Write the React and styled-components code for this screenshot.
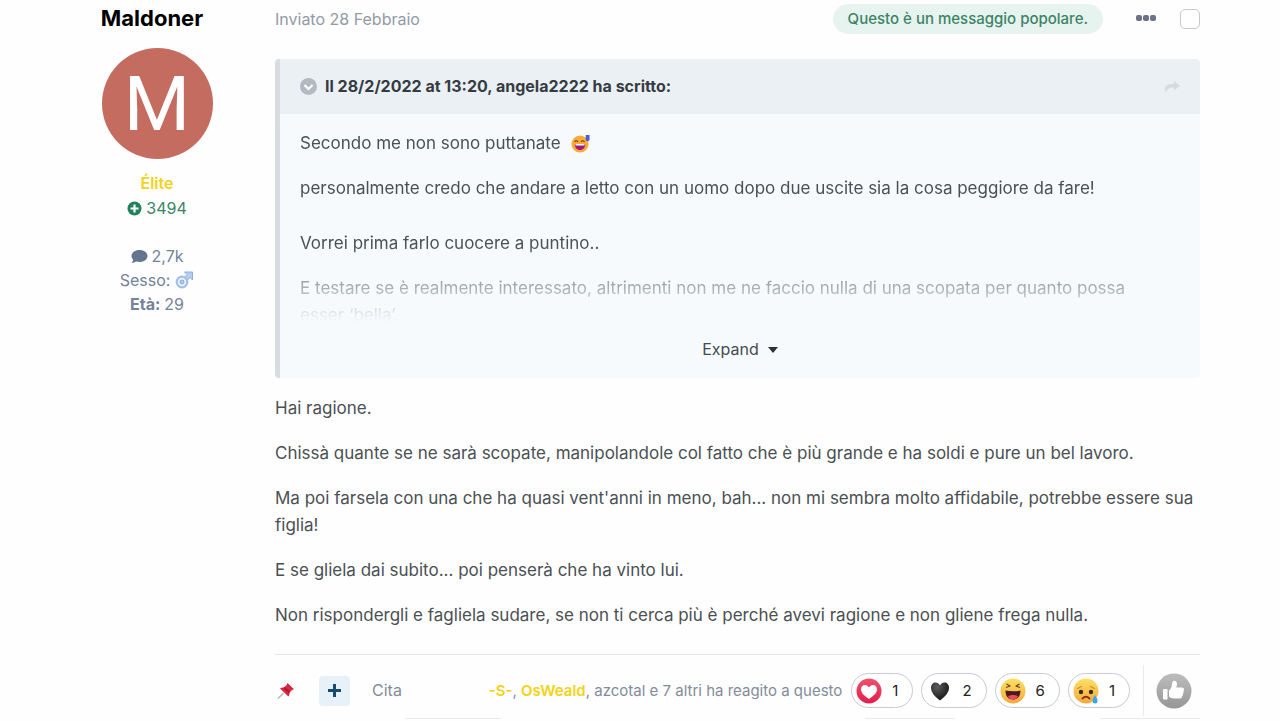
import React, { useState } from "react";
import styled, { createGlobalStyle } from "styled-components";

const GlobalStyle = createGlobalStyle`
  * {
    box-sizing: border-box;
  }
  body {
    margin: 0;
    background-color: #fefefe;
    color: #353c41;
    font-family: Inter, "Liberation Sans", sans-serif;
    font-size: 17px;
    line-height: 27px;
    overflow: hidden;
  }
  button {
    font: inherit;
    color: inherit;
    background: none;
    border: 0;
    padding: 0;
    cursor: pointer;
  }
  a {
    color: inherit;
    text-decoration: none;
  }
  svg {
    display: block;
    flex: none;
  }
`;

const Post = styled.article`
  display: flex;
  gap: 41px;
  padding: 4px 80px 0;
`;
const Author = styled.aside`
  flex: none;
  width: 154px;
  display: flex;
  flex-direction: column;
  align-items: center;
  color: #74829a;
  font-size: 16px;
  line-height: 24px;
`;
const AuthorName = styled.h3`
  margin: 0;
  padding-right: 10px;
  color: #000;
  font-size: 22px;
  font-weight: 700;
  line-height: 28px;
`;
const Avatar = styled.div`
  width: 111px;
  height: 111px;
  margin: 16px 0 12px;
  border-radius: 50%;
  background-color: #c56c61;
  color: #fff;
  font-family: Roboto, sans-serif;
  font-size: 76px;
  line-height: 113px;
  text-align: center;
`;
const Rank = styled.strong`
  margin-bottom: 1px;
  color: #f5d216;
  font-weight: 600;
`;
const AuthorRow = styled.div`
  display: flex;
  align-items: center;
  gap: 4px;
  color: ${(props) => props.$color || "inherit"};
`;
const AuthorStats = styled.div`
  display: flex;
  flex-direction: column;
  align-items: center;
  margin-top: 24px;
`;

const Content = styled.div`
  flex: 1;
  min-width: 0;
`;
const PostHeader = styled.header`
  display: flex;
  align-items: center;
  height: 30px;
  margin-bottom: 25px;
  color: #929aa7;
  font-size: 16px;
`;
const PostDate = styled.a`
  margin-right: auto;
`;
const Popular = styled.strong`
  padding: 0 15px;
  border-radius: 15px;
  background-color: #e7f3ee;
  color: #3b8465;
  font-size: 15px;
  font-weight: 500;
  line-height: 30px;
`;
const MenuButton = styled.button`
  margin: 0 24px 0 33px;
`;
const SelectPost = styled.input`
  appearance: none;
  width: 20px;
  height: 20px;
  margin: 0;
  border: 1px solid #c5c8cd;
  border-radius: 5px;
  background-color: #fff;
`;

const Quote = styled.blockquote`
  margin: 0 0 17px;
  border-left: 5px solid #d7dce0;
  border-radius: 4px;
  background-color: #f6fafd;
  overflow: hidden;
`;
const QuoteHeader = styled.div`
  display: flex;
  align-items: center;
  gap: 8px;
  height: 55px;
  padding: 0 20px;
  background-color: #ebf0f5;
  color: #353c41;
  font-size: 16px;
  font-weight: 700;
`;
const QuoteLink = styled.a`
  margin-left: auto;
`;
const QuoteBody = styled.div`
  display: flex;
  flex-direction: column;
  gap: 18px;
  max-height: ${(props) => (props.$open ? "none" : "216px")};
  padding: 16px 40px 0 20px;
  overflow: hidden;
  mask-image: ${(props) =>
    props.$open ? "none" : "linear-gradient(#000 130px, transparent 208px)"};
`;
const Text = styled.p`
  margin: 0;
  color: #4a5053;
`;
const SpacedText = styled(Text)`
  margin-top: 10px;
`;
const EmojiText = styled(Text)`
  display: flex;
  align-items: center;
  gap: 10px;
`;
const Expand = styled.button`
  display: flex;
  align-items: flex-start;
  justify-content: center;
  gap: 9px;
  width: 100%;
  height: 49px;
  padding-top: 7px;
  color: #454c50;
  font-size: 16px;
  & > svg {
    margin-top: 11px;
  }
`;

const Message = styled.div`
  display: flex;
  flex-direction: column;
  gap: 18px;
  padding-bottom: 25px;
`;

const Footer = styled.footer`
  display: flex;
  align-items: center;
  height: 64px;
  padding-top: 8px;
  padding-right: 8px;
  border-top: 1px solid #e3e5e8;
  color: #838c9a;
  font-size: 16px;
`;
const QuoteAdd = styled.button`
  display: grid;
  place-items: center;
  width: 31px;
  height: 30px;
  margin: 0 22px;
  border-radius: 4px;
  background-color: #e6f1fa;
`;
const QuoteAction = styled.button`
  margin-right: auto;
`;
const Reactors = styled.div`
  margin-right: 9px;
  font-size: 15px;
  white-space: nowrap;
`;
const Reactor = styled.a`
  color: ${(props) => (props.$elite ? "#f5d216" : "inherit")};
  font-weight: ${(props) => (props.$elite ? 600 : 400)};
`;
const Reactions = styled.div`
  display: flex;
  gap: 8px;
`;
const Reaction = styled.button`
  display: flex;
  align-items: center;
  gap: 10px;
  height: 35px;
  padding: 0 14px 0 4px;
  border: 1px solid #c9cbd2;
  border-radius: 18px;
  background-color: #fff;
  color: #222;
  font-size: 15px;
`;
const LikeArea = styled.div`
  display: flex;
  align-items: center;
  height: 51px;
  margin-left: 13px;
  padding-left: 12px;
  border-left: 1px solid #e9eaed;
`;

const NextRow = styled.div`
  display: grid;
  grid-template-columns: 130px 96px 1fr 90px 145px 100px;
  & > span {
    height: 1px;
  }
  & > span:nth-child(even) {
    background-color: #e9eaec;
  }
`;

const SweatSmile = () => (
  <svg width="19" height="19" viewBox="0 0 20 20">
    <circle cx="9.5" cy="10.5" r="9" fill="#f9ab35" />
    <path d="M3.8 8.2q1.7-2.2 3.6 0M10.6 8.2q1.7-2.2 3.6 0" stroke="#6b3a1c" strokeWidth="1.3" fill="none" />
    <path d="M4 10.5h11c0 4-2.3 6.3-5.5 6.3S4 14.5 4 10.5z" fill="#a9157c" />
    <path d="M4.7 10.5h9.6v1.5H4.8z" fill="#fff" />
    <path d="M15.5 1h4v4.5a2 2 0 0 1-4 0z" fill="#4b5be0" />
  </svg>
);

const LoveIcon = () => (
  <svg width="26" height="26" viewBox="0 0 26 26">
    <defs>
      <linearGradient id="love" x1="0" y1="0" x2="0" y2="1">
        <stop offset="0" stopColor="#f2506d" />
        <stop offset="1" stopColor="#e21d4c" />
      </linearGradient>
    </defs>
    <circle cx="13" cy="13" r="12.5" fill="url(#love)" />
    <path d="M13 21C8 17.500 5 14.700 5 11.200 5 8.600 6.900 7 9 7c1.700 0 3.100.9 4 2.500C13.900 7.900 15.300 7 17 7c2.100 0 4 1.600 4 4.200 0 3.500-3 6.300-8 9.800z" fill="#fff" />
  </svg>
);

const BlackHeart = () => (
  <svg width="26" height="26" viewBox="0 0 26 26">
    <defs>
      <radialGradient id="heart" cx="0.35" cy="0.25" r="0.7">
        <stop offset="0" stopColor="#5b5b5e" />
        <stop offset="1" stopColor="#1b1b1d" />
      </radialGradient>
    </defs>
    <path d="M14 22.500C8.800 18.600 5 14.500 5 9.800 5 6.500 7 4.500 9.500 4.500c2 0 3.600 1.100 4.500 3 .9-1.900 2.500-3 4.500-3C21 4.500 23 6.500 23 9.800c0 4.700-3.800 8.800-9 12.700z" fill="url(#heart)" />
  </svg>
);

const FaceGradient = ({ id }) => (
  <defs>
    <linearGradient id={id} x1="0" y1="0" x2="0" y2="1">
      <stop offset="0" stopColor="#fde063" />
      <stop offset="1" stopColor="#f6a83c" />
    </linearGradient>
  </defs>
);

const LaughIcon = () => (
  <svg width="26" height="26" viewBox="0 0 26 26">
    <FaceGradient id="laugh" />
    <circle cx="13" cy="13" r="12.5" fill="url(#laugh)" />
    <path d="M6.500 6l3.500 2-4 1.500M19.500 6L16 8l4 1.500" stroke="#5c4a25" strokeWidth="1.300" fill="none" strokeLinejoin="round" />
    <path d="M5.500 12.500c5 1 10 1 15 0 0 6-3 9-7.500 9s-7.500-3-7.500-9z" fill="#4b1a1c" />
    <path d="M8 18.500c1.500-2 8.500-2 10 0-1 2-3 3-5 3s-4-1-5-3z" fill="#ed4764" />
  </svg>
);

const SadIcon = () => (
  <svg width="26" height="26" viewBox="0 0 26 26">
    <FaceGradient id="sad" />
    <circle cx="13" cy="13" r="12.5" fill="url(#sad)" />
    <path d="M4.500 10.500l4-2M21.500 10.500l-4-2" stroke="#c98f35" strokeWidth="1.200" strokeLinecap="round" />
    <circle cx="8" cy="14" r="2.200" fill="#3a2a1c" />
    <circle cx="18" cy="14" r="2.200" fill="#3a2a1c" />
    <path d="M9.500 20.500q3.500-3.500 7 0" stroke="#8d2c20" strokeWidth="1.800" fill="none" strokeLinecap="round" />
    <path d="M22 17c1.500 2.500 2.500 4 2.500 6a2.500 2.500 0 0 1-5 0c0-2 1-3.500 2.500-6z" fill="#38a7e4" />
  </svg>
);

const LikeIcon = () => (
  <svg width="36" height="36" viewBox="0 0 36 36">
    <defs>
      <linearGradient id="like" x1="0" y1="0" x2="0" y2="1">
        <stop offset="0" stopColor="#bdbdbd" />
        <stop offset="1" stopColor="#969696" />
      </linearGradient>
    </defs>
    <circle cx="18" cy="18" r="17.5" fill="url(#like)" />
    <rect x="7" y="16" width="4.5" height="10.5" rx="0.8" fill="#fff" />
    <path d="M13 17.500c2-1.300 2.800-4 3-6.500.1-2 1-3.300 2.500-3.300 1.700 0 2.500 1.600 2.500 3.300 0 1.500-.5 2.600-.8 3.500h5.600c1.500 0 2.500 1 2.300 2.300-.1.600-.4 1-.8 1.300.6.800.5 2-.4 2.600.3.900 0 1.900-.8 2.400.1 1.500-.8 2.400-2.300 2.400h-5.300c-2.500 0-3.500-1-5.500-1.500z" fill="#fff" />
  </svg>
);

const reactions = [
  { name: "Mi piace", count: 1, icon: <LoveIcon /> },
  { name: "Grazie", count: 2, icon: <BlackHeart /> },
  { name: "Haha", count: 6, icon: <LaughIcon /> },
  { name: "Triste", count: 1, icon: <SadIcon /> },
];

const App = () => {
  const [open, setOpen] = useState(false);

  return (
    <>
      <GlobalStyle />
      <Post>
        <Author>
          <AuthorName>Maldoner</AuthorName>
          <Avatar>M</Avatar>
          <Rank>Élite</Rank>
          <AuthorRow $color="#3b8465">
            <svg width="15" height="15" viewBox="0 0 15 15">
              <circle cx="7.5" cy="7.5" r="7" fill="#1f8259" />
              <path d="M7.500 3.500v8M3.500 7.500h8" stroke="#fff" strokeWidth="2.2" />
            </svg>
            3494
          </AuthorRow>
          <AuthorStats>
            <AuthorRow>
              <svg width="17" height="15" viewBox="0 0 17 15">
                <path d="M8.500 1C4 1 .5 3.600.5 7c0 1.500.6 2.800 1.700 3.800C2 12 1.400 13 .8 13.900c1.700 0 3.200-.6 4.300-1.400 1.100.3 2.200.5 3.400.5 4.500 0 8-2.600 8-6s-3.500-6-8-6z" fill="#66758f" />
              </svg>
              2,7k
            </AuthorRow>
            <AuthorRow>
              Sesso:
              <svg width="20" height="20" viewBox="0 0 20 20">
                <path d="M10.500 2h8v8l-2.500-2.500-3 3-3-3 3-3z" fill="#b5cdf0" stroke="#8fb0e0" />
                <circle cx="8" cy="12" r="5.3" fill="#edf4fd" stroke="#a3bfe9" strokeWidth="2.2" />
                <circle cx="8" cy="12" r="2" fill="#b9cff2" stroke="#7ea3dc" />
              </svg>
            </AuthorRow>
            <AuthorRow>
              <b>Età:</b> 29
            </AuthorRow>
          </AuthorStats>
        </Author>

        <Content>
          <PostHeader>
            <PostDate href="#post">Inviato 28 Febbraio</PostDate>
            <Popular>Questo è un messaggio popolare.</Popular>
            <MenuButton aria-label="Altre opzioni">
              <svg width="20" height="8" viewBox="0 0 20 8">
                <g fill="#6c7288">
                  <rect width="6" height="6" rx="2" />
                  <rect x="7" width="6" height="6" rx="2" />
                  <rect x="14" width="6" height="6" rx="2" />
                </g>
              </svg>
            </MenuButton>
            <SelectPost type="checkbox" aria-label="Seleziona messaggio" />
          </PostHeader>

          <Quote>
            <QuoteHeader>
              <svg width="17" height="17" viewBox="0 0 17 17">
                <circle cx="8.5" cy="8.5" r="8.5" fill="#b4b9bf" />
                <path d="M4.500 7l4 4 4-4" stroke="#fff" strokeWidth="2.2" fill="none" />
              </svg>
              Il 28/2/2022 at 13:20, angela2222 ha scritto:
              <QuoteLink href="#quoted" aria-label="Vai al messaggio">
                <svg width="16" height="14" viewBox="0 0 16 14">
                  <path d="M10 1l6 4.800-6 4.800V7.500C5.500 7.300 2.800 8.500 1.800 13 .2 9.500-.5 4 10 3.800z" fill="#d5dadf" />
                </svg>
              </QuoteLink>
            </QuoteHeader>
            <QuoteBody $open={open}>
              <EmojiText>
                Secondo me non sono puttanate <SweatSmile />
              </EmojiText>
              <Text>
                personalmente credo che andare a letto con un uomo dopo due
                uscite sia la cosa peggiore da fare!
              </Text>
              <SpacedText>Vorrei prima farlo cuocere a puntino..</SpacedText>
              <Text>
                E testare se è realmente interessato, altrimenti non me ne
                faccio nulla di una scopata per quanto possa esser ‘bella’.
              </Text>
            </QuoteBody>
            <Expand aria-expanded={open} onClick={() => setOpen(!open)}>
              Expand
              <svg width="10" height="6" viewBox="0 0 10 6">
                <path d="M0 0h10L5 6z" fill="#2b3238" />
              </svg>
            </Expand>
          </Quote>

          <Message>
            <Text>Hai ragione.</Text>
            <Text>
              Chissà quante se ne sarà scopate, manipolandole col fatto che è
              più grande e ha soldi e pure un bel lavoro.
            </Text>
            <Text>
              Ma poi farsela con una che ha quasi vent'anni in meno, bah... non
              mi sembra molto affidabile, potrebbe essere sua figlia!
            </Text>
            <Text>E se gliela dai subito... poi penserà che ha vinto lui.</Text>
            <Text>
              Non rispondergli e fagliela sudare, se non ti cerca più è perché
              avevi ragione e non gliene frega nulla.
            </Text>
          </Message>

          <Footer>
            <button aria-label="Fissa">
              <svg width="22" height="18" viewBox="0 0 22 18">
                <path d="M3 16.500L8.500 11" stroke="#a8b4bd" strokeWidth="1.2" />
                <path d="M12.500 1l6.500 6.300-2 .7-2.500 2.500c.3 1.500-.2 3-1.200 4L5 6.500c1.200-1 2.600-1.300 4-1L11.700 3z" fill="#dc2340" />
                <path d="M9 5.500l5.500 5" stroke="#a5122f" strokeWidth="1.3" />
              </svg>
            </button>
            <QuoteAdd aria-label="Multi-cita">
              <svg width="13" height="13" viewBox="0 0 13 13">
                <path d="M6.500 0v13M0 6.500h13" stroke="#174a70" strokeWidth="3" />
              </svg>
            </QuoteAdd>
            <QuoteAction>Cita</QuoteAction>
            <Reactors>
              <Reactor href="#s" $elite>-S-</Reactor>,{" "}
              <Reactor href="#osweald" $elite>OsWeald</Reactor>,{" "}
              <Reactor href="#azcotal">azcotal</Reactor> e{" "}
              <Reactor href="#altri">7 altri</Reactor> ha reagito a questo
            </Reactors>
            <Reactions>
              {reactions.map((reaction) => (
                <Reaction key={reaction.name} aria-label={reaction.name}>
                  {reaction.icon}
                  {reaction.count}
                </Reaction>
              ))}
            </Reactions>
            <LikeArea>
              <button aria-label="Aggiungi reazione">
                <LikeIcon />
              </button>
            </LikeArea>
          </Footer>
          <NextRow>
            <span />
            <span />
            <span />
            <span />
            <span />
            <span />
          </NextRow>
        </Content>
      </Post>
    </>
  );
};

export default App;
